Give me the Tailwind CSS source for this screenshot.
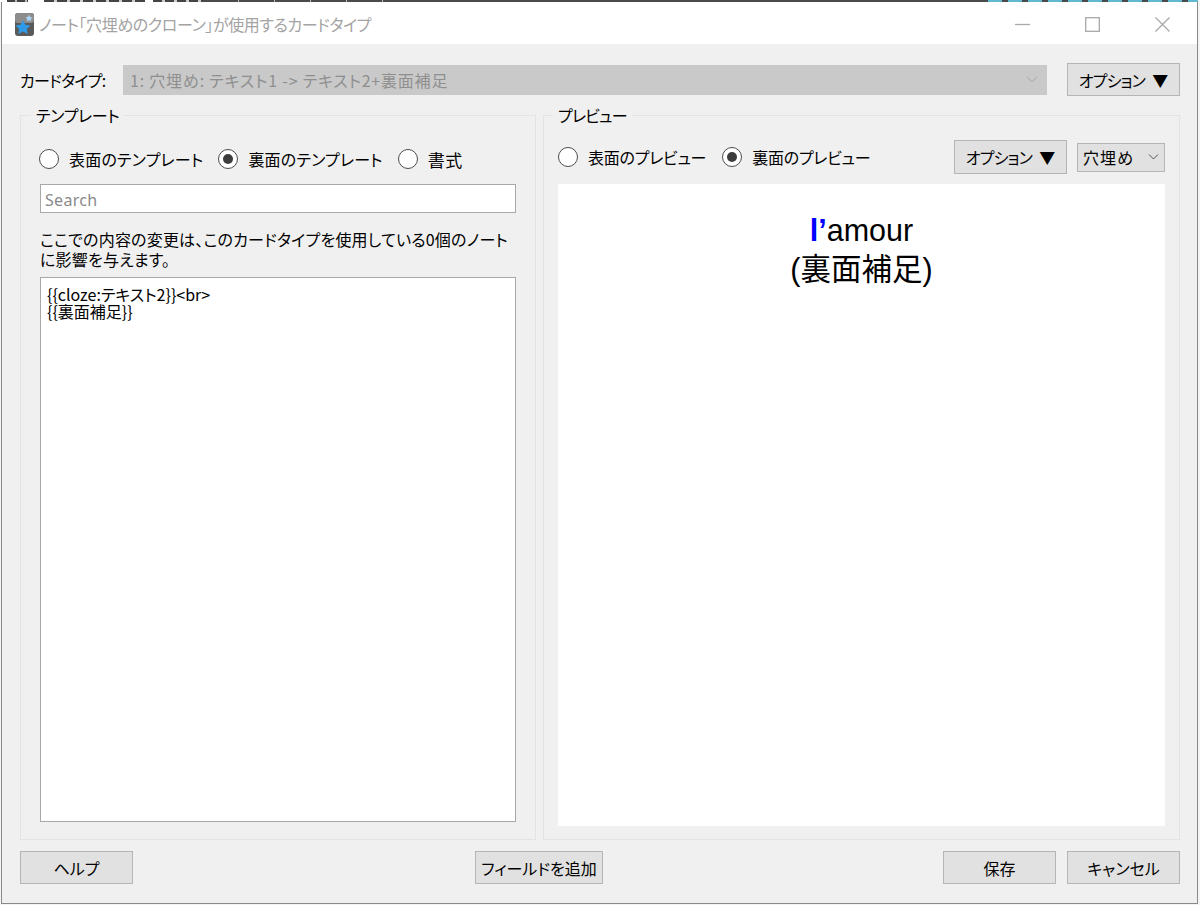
<!DOCTYPE html>
<html lang="ja">
<head>
    <meta charset="UTF-8">
    <title>カードタイプ</title>
    <script src="https://cdn.jsdelivr.net/npm/@tailwindcss/browser@4"></script>
</head>
<body class="w-[1200px] h-[905px] overflow-hidden bg-[#f4f4f4] font-['Noto_Sans_CJK_JP','Noto_Sans',sans-serif] text-[16px] text-black [font-feature-settings:'palt'] leading-none">
    <!-- Desktop showing behind the window's top edge -->
    <div class="h-[2px] flex">
        <div class="w-[7px] bg-white"></div>
        <div class="w-[21px] bg-[repeating-linear-gradient(90deg,#444_0,#444_8px,#bbb_8px,#bbb_10px)]"></div>
        <div class="w-[16px] bg-white"></div>
        <div class="w-[101px] bg-[repeating-linear-gradient(90deg,#444_0,#444_10px,#ccc_10px,#ccc_13px)]"></div>
        <div class="w-[8px] bg-white"></div>
        <div class="w-[50px] bg-[repeating-linear-gradient(90deg,#444_0,#444_9px,#ccc_9px,#ccc_12px)]"></div>
        <div class="w-[185px] bg-[repeating-linear-gradient(90deg,#4a4a4a_0,#4a4a4a_35px,#bbb_35px,#bbb_36px)]"></div>
        <div class="w-[600px] bg-[#4a4a4a]"></div>
        <div class="w-[210px] bg-[repeating-linear-gradient(90deg,#5fb9cf_0,#5fb9cf_14px,#4a4a4a_14px,#4a4a4a_20px)]"></div>
    </div>
    <div class="w-[1197px] h-[902px] ml-px border-l border-r border-b border-[#8a8a8a] bg-[#f0f0f0] flex flex-col">

        <!-- Title bar -->
        <div class="h-[42px] bg-white flex items-center pl-[13px] pt-[2px] shrink-0">
            <svg class="w-[19px] h-[23px] shrink-0" viewBox="0 0 19 23">
                <rect x="0" y="0" width="19" height="23" rx="3" fill="#5a5a5a"/>
                <rect x="0" y="0" width="19" height="10" rx="3" fill="#8c8c8c"/>
                <path d="M8 7l2.300 4.700 5.200.7-3.800 3.600 1 5.100L8 18.600l-4.700 2.500 1-5.100L.5 12.400l5.200-.7z" fill="#2f9be8"/>
                <path d="M14 1.500l1.100 2.400 2.600.3-1.900 1.800.5 2.600-2.300-1.300-2.300 1.300.5-2.600-1.900-1.800 2.600-.3z" fill="#a8d4f5"/>
            </svg>
            <span class="ml-[5px] text-[16px] tracking-[-0.4px] text-[#a3a3a3]">ノート「穴埋めのクローン」が使用するカードタイプ</span>
            <div class="ml-auto flex items-center pr-[27px]">
                <svg class="w-[15px] h-[15px]" viewBox="0 0 15 15"><path d="M0 7.500h15" stroke="#a8a8a8" stroke-width="1.300"/></svg>
                <svg class="w-[15px] h-[15px] ml-[55px]" viewBox="0 0 15 15"><rect x=".7" y=".7" width="13.600" height="13.600" fill="none" stroke="#a8a8a8" stroke-width="1.300"/></svg>
                <svg class="w-[15px] h-[15px] ml-[55px]" viewBox="0 0 15 15"><path d="M.5.5l14 14M14.500.5l-14 14" stroke="#a8a8a8" stroke-width="1.300"/></svg>
            </div>
        </div>

        <!-- Card type row -->
        <div class="flex items-center h-[33px] mt-[19px] ml-[18px] mr-[17px] shrink-0">
            <span class="w-[103px] shrink-0 tracking-[-0.7px]">カードタイプ:</span>
            <div class="w-[924px] h-[30px] bg-[#c9c9c9] flex items-center pl-[7px] pr-[9px] text-[#8f8f8f]">
                <span class="tracking-[0.8px]">1: 穴埋め: テキスト1 -&gt; テキスト2+裏面補足</span>
                <svg class="ml-auto w-[12px] h-[7px]" viewBox="0 0 12 7"><path d="M1 1l5 5 5-5" fill="none" stroke="#a8a8a8" stroke-width="1"/></svg>
            </div>
            <button class="ml-[20px] w-[113px] h-[33px] bg-[#e1e1e1] border border-[#b5b5b5]"><span class="tracking-[-0.8px]">オプション</span><span class="ml-[7px]">▼</span></button>
        </div>

        <!-- Editor and preview -->
        <div class="flex gap-[7px] mt-[8px] ml-[18px] mr-[17px] h-[736px] shrink-0">
            <fieldset class="w-[516px] border border-[#e3e3e3] px-[19px]">
                <legend class="-ml-[9px] px-[5px] h-[22px] leading-[22px] tracking-[-0.3px]">テンプレート</legend>
                <div class="flex items-center h-[20px] mt-[23px] -ml-px">
                    <span class="w-[20px] h-[20px] rounded-full bg-white border border-[#4d4d4d] shrink-0"></span>
                    <span class="ml-[10px] tracking-[0.2px]">表面のテンプレート</span>
                    <span class="ml-[15px] w-[20px] h-[20px] rounded-full bg-white border border-[#4d4d4d] flex items-center justify-center shrink-0"><span class="w-[10px] h-[10px] rounded-full bg-[#3c3c3c]"></span></span>
                    <span class="ml-[10px] tracking-[0.2px]">裏面のテンプレート</span>
                    <span class="ml-[15px] w-[20px] h-[20px] rounded-full bg-white border border-[#4d4d4d] shrink-0"></span>
                    <span class="ml-[10px] text-[17px] tracking-[0.5px]">書式</span>
                </div>
                <div class="h-[29px] mt-[15px] bg-white border border-[#a8a8a8] flex items-center pl-[4px] pt-[2px] text-[#8a8a8a] font-['Noto_Sans',sans-serif] tracking-[0.3px]">Search</div>
                <p class="mt-[16px] leading-[20px] tracking-[0.2px]">ここでの内容の変更は、このカードタイプを使用している0個のノートに影響を与えます。</p>
                <div class="h-[545px] mt-[8px] bg-white border border-[#a8a8a8] pl-[6px] pt-[8px] leading-[17px] whitespace-pre-line">{{cloze:テキスト2}}&lt;br&gt;
{{裏面補足}}</div>
            </fieldset>

            <fieldset class="w-[637px] border border-[#e3e3e3] pl-[14px] pr-[14px]">
                <legend class="-ml-[5px] px-[5px] h-[22px] leading-[22px] tracking-[-0.8px]">プレビュー</legend>
                <div class="flex items-center h-[34px] mt-[14px]">
                    <span class="w-[20px] h-[20px] rounded-full bg-white border border-[#4d4d4d] shrink-0"></span>
                    <span class="ml-[10px] tracking-[-0.25px]">表面のプレビュー</span>
                    <span class="ml-[16px] w-[20px] h-[20px] rounded-full bg-white border border-[#4d4d4d] flex items-center justify-center shrink-0"><span class="w-[10px] h-[10px] rounded-full bg-[#3c3c3c]"></span></span>
                    <span class="ml-[10px] tracking-[-0.25px]">裏面のプレビュー</span>
                    <button class="ml-auto w-[113px] h-[34px] bg-[#e1e1e1] border border-[#b5b5b5]"><span class="tracking-[-0.8px]">オプション</span><span class="ml-[7px]">▼</span></button>
                    <div class="ml-[10px] w-[88px] h-[29px] bg-[#e1e1e1] border border-[#b5b5b5] flex items-center pl-[5px] pr-[5px]">
                        <span class="tracking-[1px]">穴埋め</span>
                        <svg class="ml-auto w-[11px] h-[6px]" viewBox="0 0 11 6"><path d="M1 .5l4.500 4.500L10 .5" fill="none" stroke="#555" stroke-width="1"/></svg>
                    </div>
                </div>
                <div class="h-[642px] mt-[10px] bg-white pt-[27px] text-center font-['Liberation_Sans','Noto_Sans_CJK_JP',sans-serif] text-[30.500px] leading-[39px] [font-feature-settings:normal]">
                    <b class="text-[#0000ff]">l’</b>amour<br>(裏面補足)
                </div>
            </fieldset>
        </div>

        <!-- Bottom buttons -->
        <div class="flex items-center h-[33px] mt-[11px] ml-[18px] mr-[17px] shrink-0">
            <button class="w-[113px] h-[33px] bg-[#e1e1e1] border border-[#b5b5b5]">ヘルプ</button>
            <button class="ml-[342px] w-[128px] h-[33px] bg-[#e1e1e1] border border-[#b5b5b5]">フィールドを追加</button>
            <button class="ml-auto w-[113px] h-[33px] bg-[#e1e1e1] border border-[#b5b5b5]">保存</button>
            <button class="ml-[11px] w-[113px] h-[33px] bg-[#e1e1e1] border border-[#b5b5b5]">キャンセル</button>
        </div>
    </div>
</body>
</html>
